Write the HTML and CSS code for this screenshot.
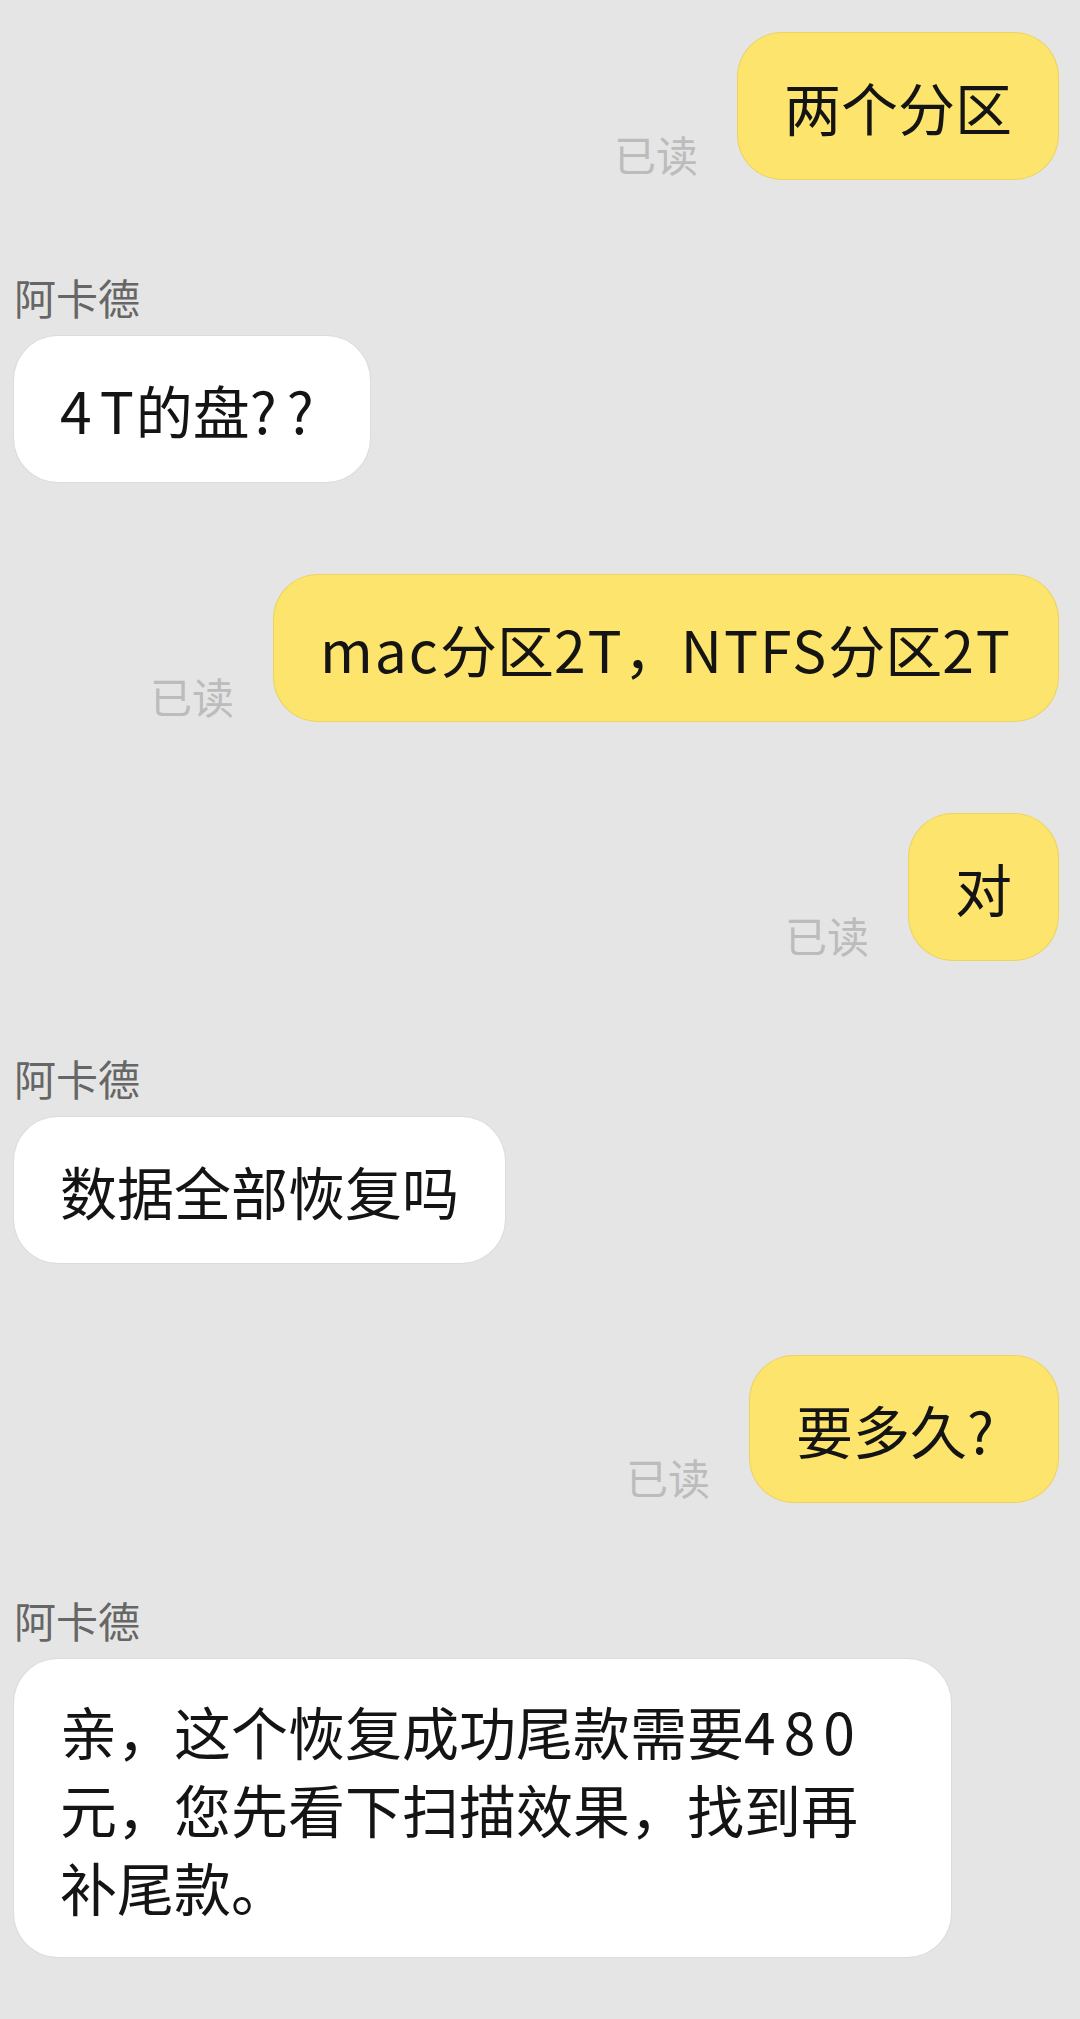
FILE: index.html
```html
<!DOCTYPE html>
<html lang="zh-CN">
<head>
<meta charset="utf-8">
<title>聊天</title>
<link rel="stylesheet" href="styles.css">
</head>
<body>
<div class="chat">
  <div class="row sent">
    <span class="read">已读</span>
    <div class="bubble mine">两个分区</div>
  </div>
  <div class="row recv">
    <div class="name">阿卡德</div>
    <div class="bubble theirs"><span class="num">4</span><span class="lat">T</span>的盘<span class="q">??</span></div>
  </div>
  <div class="row sent">
    <span class="read">已读</span>
    <div class="bubble mine"><span class="lat">mac</span>分区<span class="lat">2T</span>，<span class="lat">NTFS</span>分区<span class="lat">2T</span></div>
  </div>
  <div class="row sent">
    <span class="read">已读</span>
    <div class="bubble mine">对</div>
  </div>
  <div class="row recv">
    <div class="name">阿卡德</div>
    <div class="bubble theirs">数据全部恢复吗</div>
  </div>
  <div class="row sent">
    <span class="read">已读</span>
    <div class="bubble mine">要多久<span class="q end">?</span></div>
  </div>
  <div class="row recv">
    <div class="name">阿卡德</div>
    <div class="bubble theirs wide">亲，这个恢复成功尾款需要<span class="num">480</span><br>元，您先看下扫描效果，找到再<br>补尾款。</div>
  </div>
</div>
</body>
</html>
```

FILE: styles.css
```css
html, body {
  margin: 0;
  padding: 0;
  background: #e5e5e5;
}

body {
  font-family: "Noto Sans CJK SC", "Noto Sans", sans-serif;
  height: 2019px;
  overflow: hidden;
}

.chat {
  display: flex;
  flex-direction: column;
  gap: 93px;
  padding: 33px 22px 0 14px;
}

.row.sent {
  display: flex;
  justify-content: flex-end;
  align-items: flex-end;
  gap: 40px;
}

.row.recv {
  display: flex;
  flex-direction: column;
  align-items: flex-start;
  gap: 14px;
}

.name {
  font-size: 42px;
  line-height: 50px;
  color: #666666;
}

.read {
  font-size: 42px;
  line-height: 50px;
  color: #bcbcbc;
}

.bubble {
  font-size: 57px;
  line-height: 78px;
  padding: 34px 46px;
  border-radius: 44px;
  color: #141414;
  box-sizing: border-box;
}

.bubble.mine {
  background: #fde46c;
  box-shadow: 0 0 0 1px #ecd362;
}

.bubble.theirs {
  background: #ffffff;
  box-shadow: 0 0 0 1px #dcdcdc;
}

.bubble.wide {
  width: 937px;
  padding-top: 32px;
  padding-bottom: 32px;
}

.lat {
  letter-spacing: 2px;
}

.num {
  letter-spacing: 8px;
}

.q {
  letter-spacing: 10px;
}

.q.end {
  letter-spacing: 18px;
}
```
